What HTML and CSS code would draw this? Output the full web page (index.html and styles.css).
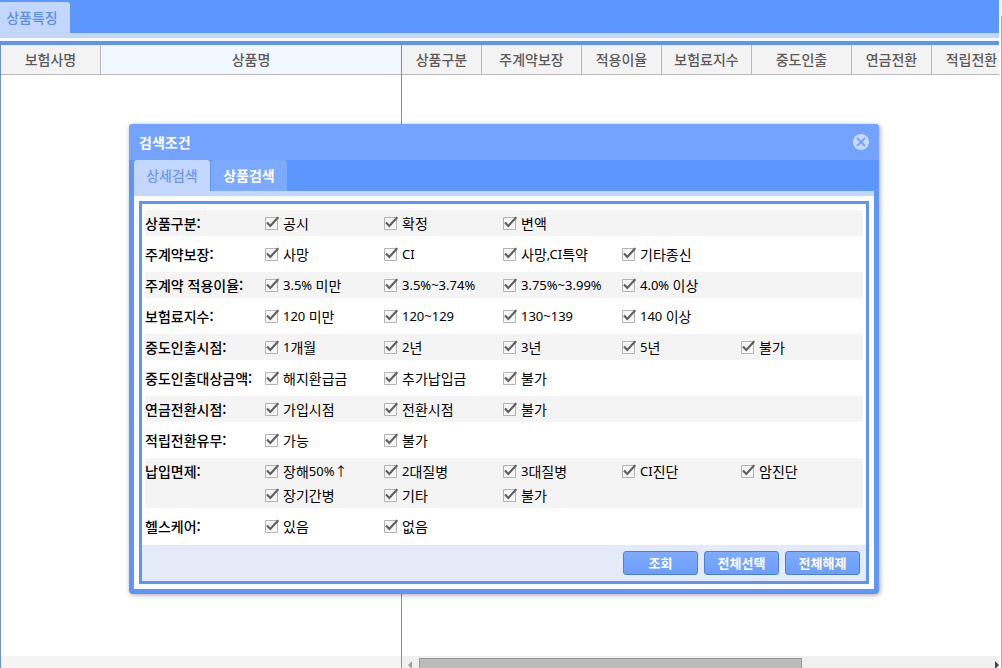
FILE: index.html
```html
<!DOCTYPE html>
<html lang="ko">
<head>
<meta charset="utf-8">
<title>상품특징</title>
<link rel="stylesheet" href="styles.css">
</head>
<body>
<div class="page">
  <nav class="page-tabs"><button class="page-tab" type="button">상품특징</button></nav>
  <main class="grid">
    <section class="pane pane-fixed">
      <table class="head">
        <colgroup><col class="w100"><col></colgroup>
        <thead><tr><th>보험사명</th><th class="sorted">상품명</th></tr></thead>
      </table>
      <div class="pane-body"></div>
      <div class="pane-foot"></div>
    </section>
    <section class="pane pane-scroll">
      <table class="head head-wide">
        <colgroup><col class="w80"><col class="w100"><col class="w80"><col class="w90"><col class="w100"><col class="w80"><col class="w80"></colgroup>
        <thead><tr><th>상품구분</th><th>주계약보장</th><th>적용이율</th><th>보험료지수</th><th>중도인출</th><th>연금전환</th><th>적립전환</th></tr></thead>
      </table>
      <div class="pane-body"></div>
      <div class="scrollbar">
        <svg class="arrow" viewBox="0 0 17 17"><path d="M10 5v8L6 9z" fill="#a0a0a0"/></svg>
        <div class="track"><div class="thumb"></div></div>
        <svg class="arrow arrow-end" viewBox="0 0 9 17"><path d="M5 5v8l4-4z" fill="#444"/></svg>
      </div>
    </section>
  </main>
</div>

<div class="dialog" role="dialog" aria-labelledby="dialog-title">
  <header class="dialog-head">
    <h1 class="dialog-title" id="dialog-title">검색조건</h1>
    <button class="close" type="button" aria-label="닫기"><svg viewBox="0 0 16 16"><circle cx="8" cy="8" r="8" fill="#c7daff"/><path d="M4 4l8 8m0-8l-8 8" stroke="#74a3ff" stroke-width="2" fill="none"/></svg></button>
  </header>
  <nav class="tabs">
    <button class="tab tab-active" type="button">상세검색</button>
    <button class="tab" type="button">상품검색</button>
  </nav>
  <form class="panel">
    <div class="rows">
      <fieldset class="row" aria-labelledby="n1">
        <div class="name" id="n1">상품구분:</div>
        <div class="options">
          <label class="option"><input type="checkbox" checked>공시</label>
          <label class="option"><input type="checkbox" checked>확정</label>
          <label class="option"><input type="checkbox" checked>변액</label>
        </div>
      </fieldset>
      <fieldset class="row" aria-labelledby="n2">
        <div class="name" id="n2">주계약보장:</div>
        <div class="options">
          <label class="option"><input type="checkbox" checked>사망</label>
          <label class="option"><input type="checkbox" checked><span class="latin">CI</span></label>
          <label class="option"><input type="checkbox" checked>사망<span class="latin">,CI</span>특약</label>
          <label class="option"><input type="checkbox" checked>기타종신</label>
        </div>
      </fieldset>
      <fieldset class="row" aria-labelledby="n3">
        <div class="name" id="n3">주계약 적용이율:</div>
        <div class="options">
          <label class="option"><input type="checkbox" checked><span class="latin">3.5% </span>미만</label>
          <label class="option"><input type="checkbox" checked><span class="latin">3.5%~3.74%</span></label>
          <label class="option"><input type="checkbox" checked><span class="latin">3.75%~3.99%</span></label>
          <label class="option"><input type="checkbox" checked><span class="latin">4.0% </span>이상</label>
        </div>
      </fieldset>
      <fieldset class="row" aria-labelledby="n4">
        <div class="name" id="n4">보험료지수:</div>
        <div class="options">
          <label class="option"><input type="checkbox" checked><span class="latin">120 </span>미만</label>
          <label class="option"><input type="checkbox" checked><span class="latin">120~129</span></label>
          <label class="option"><input type="checkbox" checked><span class="latin">130~139</span></label>
          <label class="option"><input type="checkbox" checked><span class="latin">140 </span>이상</label>
        </div>
      </fieldset>
      <fieldset class="row" aria-labelledby="n5">
        <div class="name" id="n5">중도인출시점:</div>
        <div class="options">
          <label class="option"><input type="checkbox" checked><span class="latin">1</span>개월</label>
          <label class="option"><input type="checkbox" checked><span class="latin">2</span>년</label>
          <label class="option"><input type="checkbox" checked><span class="latin">3</span>년</label>
          <label class="option"><input type="checkbox" checked><span class="latin">5</span>년</label>
          <label class="option"><input type="checkbox" checked>불가</label>
        </div>
      </fieldset>
      <fieldset class="row" aria-labelledby="n6">
        <div class="name" id="n6">중도인출대상금액:</div>
        <div class="options">
          <label class="option"><input type="checkbox" checked>해지환급금</label>
          <label class="option"><input type="checkbox" checked>추가납입금</label>
          <label class="option"><input type="checkbox" checked>불가</label>
        </div>
      </fieldset>
      <fieldset class="row" aria-labelledby="n7">
        <div class="name" id="n7">연금전환시점:</div>
        <div class="options">
          <label class="option"><input type="checkbox" checked>가입시점</label>
          <label class="option"><input type="checkbox" checked>전환시점</label>
          <label class="option"><input type="checkbox" checked>불가</label>
        </div>
      </fieldset>
      <fieldset class="row" aria-labelledby="n8">
        <div class="name" id="n8">적립전환유무:</div>
        <div class="options">
          <label class="option"><input type="checkbox" checked>가능</label>
          <label class="option"><input type="checkbox" checked>불가</label>
        </div>
      </fieldset>
      <fieldset class="row" aria-labelledby="n9">
        <div class="name" id="n9">납입면제:</div>
        <div class="options">
          <label class="option"><input type="checkbox" checked>장해<span class="latin">50%↑</span></label>
          <label class="option"><input type="checkbox" checked><span class="latin">2</span>대질병</label>
          <label class="option"><input type="checkbox" checked><span class="latin">3</span>대질병</label>
          <label class="option"><input type="checkbox" checked><span class="latin">CI</span>진단</label>
          <label class="option"><input type="checkbox" checked>암진단</label>
          <label class="option"><input type="checkbox" checked>장기간병</label>
          <label class="option"><input type="checkbox" checked>기타</label>
          <label class="option"><input type="checkbox" checked>불가</label>
        </div>
      </fieldset>
      <fieldset class="row" aria-labelledby="n10">
        <div class="name" id="n10">헬스케어:</div>
        <div class="options">
          <label class="option"><input type="checkbox" checked>있음</label>
          <label class="option"><input type="checkbox" checked>없음</label>
        </div>
      </fieldset>
    </div>
    <footer class="actions">
      <button class="action" type="button">조회</button>
      <button class="action" type="button">전체선택</button>
      <button class="action" type="button">전체해제</button>
    </footer>
  </form>
</div>
</body>
</html>
```
FILE: styles.css
```css
* { box-sizing: border-box; }

body {
  margin: 0;
  overflow: hidden;
  background: #fff;
  color: #000;
  font: 14px/20px "Noto Sans CJK KR", sans-serif;
}

button {
  margin: 0;
  padding: 0;
  border: 0;
  background: none;
  font: inherit;
  cursor: pointer;
}

.page {
  display: flex;
  flex-direction: column;
  height: 100vh;
  padding-right: 3px;
  background: linear-gradient(#b0b0b0, #b0b0b0) right 0 top 16px / 1px 100% no-repeat,
    linear-gradient(#eaf4fd, #fff 60px);
}

.page-tabs {
  display: flex;
  height: 38px;
  padding-top: 2px;
  border-bottom: 5px solid #c3d7fd;
  background: #5c96ff;
}

.page-tab {
  width: 70px;
  padding: 0 6px 2px 0;
  border-top-right-radius: 3px;
  background: #c3d7fd;
  color: #5e8fe8;
  font-weight: 500;
}

.grid {
  display: flex;
  flex: 1;
  min-height: 0;
  border-top: 4px solid #5f95f2;
  border-left: 1px solid #6d8fd8;
  margin-top: 3px;
  background: #fff;
}

.pane {
  display: flex;
  flex-direction: column;
  overflow: hidden;
}

.pane-fixed {
  flex: none;
  width: 401px;
  border-right: 1px solid #5f95e8;
}

.pane-scroll { flex: 1; }
.pane-body { flex: 1; }

.pane-foot {
  height: 12px;
  background: #f4f4f4;
}

.head {
  width: 100%;
  table-layout: fixed;
  border-collapse: separate;
  border-spacing: 0;
}

.head-wide { width: 610px; }
.w80 { width: 80px; }
.w90 { width: 90px; }
.w100 { width: 100px; }

.head th {
  height: 30px;
  padding: 0 0 2px;
  border-right: 1px solid #b9b9bd;
  border-bottom: 1px solid #b9b9bd;
  background: #f3f3f3;
  color: #5c5c5c;
  font-weight: 500;
}

.head .sorted {
  border-right: 0;
  background: #f1f7ff;
}

.scrollbar {
  display: flex;
  height: 12px;
  overflow: hidden;
  background: #f0f0f0;
}

.arrow {
  flex: none;
  width: 17px;
  height: 17px;
}

.arrow-end { width: 9px; }

.track {
  flex: 1;
  padding-top: 2px;
}

.thumb {
  width: 67%;
  height: 14px;
  border: 1px solid #999;
  background: #bbb;
}

.dialog {
  position: absolute;
  top: 124px;
  left: 129px;
  width: 750px;
  padding-bottom: 5px;
  border-radius: 4px;
  background: #5f95f8;
  box-shadow: 1px 1px 5px rgba(0, 0, 0, 0.35);
}

.dialog-head {
  display: flex;
  align-items: center;
  justify-content: space-between;
  height: 36px;
  padding: 0 10px;
  border-radius: 4px 4px 0 0;
  background: #74a3ff;
}

.dialog-title {
  margin: 0;
  color: #fff;
  font-size: 14px;
  font-weight: 700;
}

.close,
.close svg {
  display: block;
  width: 16px;
  height: 16px;
}

.tabs {
  display: flex;
  gap: 1px;
  height: 36px;
  margin: 0 5px;
  border-bottom: 5px solid #c3d7fd;
  background: #5c96ff;
}

.tab {
  width: 76px;
  padding-bottom: 2px;
  border-radius: 3px 3px 0 0;
  background: #7baaff;
  color: #fff;
  font-weight: 700;
}

.tab-active {
  background: #c3d7fd;
  color: #6f97e6;
  font-weight: 500;
}

.panel {
  margin: 0 5px;
  border: 5px solid #fff;
  background: #fff;
}

.rows {
  display: grid;
  gap: 5px;
  padding: 6px 3px;
  border: 3px solid #5f95f2;
  border-bottom: 0;
}

.row {
  display: grid;
  grid-template-columns: 120px 1fr;
  min-width: 0;
  margin: 0;
  padding: 1px 0;
  border: 0;
}

.row:nth-child(odd) { background: #f4f4f4; }

.name {
  font-weight: 500;
  line-height: 24px;
  white-space: nowrap;
}

.options {
  display: grid;
  grid-template-columns: repeat(5, 119px);
}

.option {
  display: flex;
  align-items: center;
  height: 24px;
  font-weight: 400;
  white-space: pre;
}

.latin {
  font-family: "Noto Sans", "Noto Sans CJK KR", sans-serif;
  font-size: 13px;
}

.option input {
  appearance: none;
  width: 14px;
  height: 14px;
  margin: 0 4px 0 0;
  background: url("data:image/svg+xml,%3Csvg xmlns='http://www.w3.org/2000/svg' viewBox='0 0 14 14'%3E%3Cpath d='M.5 1.500h12v12H.5z' fill='%23f6f6f6' stroke='%23b4b4b4'/%3E%3C/svg%3E");
}

.option input:checked {
  background-image: url("data:image/svg+xml,%3Csvg xmlns='http://www.w3.org/2000/svg' viewBox='0 0 14 14'%3E%3Cpath d='M.5 1.500h12v12H.5z' fill='%23f6f6f6' stroke='%23b4b4b4'/%3E%3Cpath d='M2 6.500L5.300 10 13.300 1.200' fill='none' stroke='%23606060' stroke-width='2.200'/%3E%3C/svg%3E");
}

.actions {
  display: flex;
  justify-content: flex-end;
  gap: 6px;
  padding: 6px;
  border: 3px solid #5f95f2;
  border-top: 0;
  background: #e4eaf7;
}

.action {
  width: 75px;
  height: 24px;
  border: 1px solid #4a80d8;
  border-radius: 3px;
  background: linear-gradient(#7facff, #6c9dfa);
  color: #fff;
  font-size: 13px;
  font-weight: 700;
  line-height: 20px;
}
```
